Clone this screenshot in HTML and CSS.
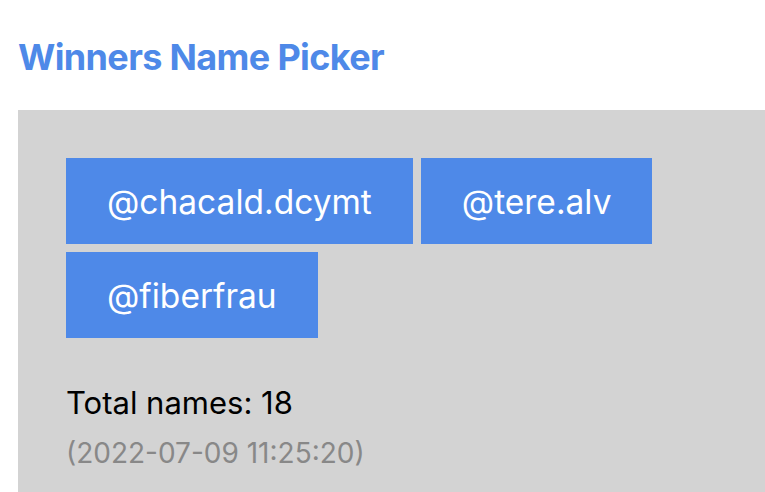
FILE: index.html
```html
<!DOCTYPE html>
<html lang="en">
<head>
    <meta charset="UTF-8">
    <meta name="viewport" content="width=device-width, initial-scale=1.0">
    <title>Winners Name Picker</title>
    <link rel="stylesheet" href="styles.css">
</head>
<body>
    <h1 class="title">Winners Name Picker</h1>
    <div class="panel">
        <div class="winners">
            <div class="winner">@chacald.dcymt</div>
            <div class="winner">@tere.alv</div>
            <div class="winner">@fiberfrau</div>
        </div>
        <p class="total">Total names: 18</p>
        <p class="stamp">(2022-07-09 11:25:20)</p>
    </div>
</body>
</html>
```

FILE: styles.css
```css
body {
    font-family: Inter, 'Noto Sans', sans-serif;
    margin: 0;
    padding: 0;
    background: white;
    height: 100vh;
    display: flex;
    flex-direction: column;
    overflow: hidden;
}
.title {
    color: #4e89e8;
    font-size: 36px;
    font-weight: 700;
    line-height: 40px;
    letter-spacing: -0.65px;
    margin: 37px 0 33px 18px;
}
.panel {
    flex: 1;
    margin-left: 18px;
    padding: 48px 48px 0;
    background: #d3d3d3;
}
.winners {
    display: flex;
    flex-wrap: wrap;
    gap: 8px;
    width: 620px;
}
.winner {
    display: flex;
    align-items: center;
    height: 86px;
    padding: 2px 41px 0;
    box-sizing: border-box;
    background: #4e89e8;
    color: white;
    font-size: 33.5px;
}
.total {
    font-size: 31px;
    line-height: 36px;
    color: black;
    margin: 47px 0 14px 0;
}
.stamp {
    font-size: 28px;
    line-height: 36px;
    color: #888;
    margin: 0;
}
```
